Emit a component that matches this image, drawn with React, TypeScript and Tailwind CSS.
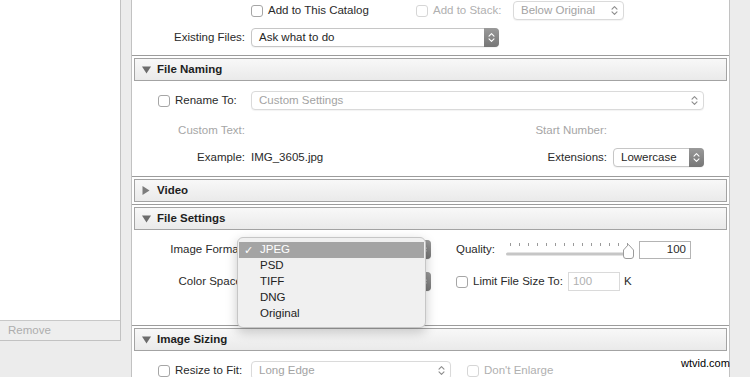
import React from "react";

const FONT = { fontFamily: '"Liberation Sans", Arial, Helvetica, sans-serif' };

function UpDown({ color }: { color: string }) {
  return (
    <svg width="7" height="11" viewBox="0 0 7 11">
      <path
        d="M1 4.2 L3.5 1.6 L6 4.2 M1 6.8 L3.5 9.4 L6 6.8"
        fill="none"
        stroke={color}
        strokeWidth="1.1"
        strokeLinecap="round"
        strokeLinejoin="round"
      />
    </svg>
  );
}

function Select({
  w,
  text,
  dark,
  disabled,
}: {
  w: string;
  text: string;
  dark?: boolean;
  disabled?: boolean;
}) {
  return (
    <div
      className={`${w} flex items-center h-[19px] rounded-[4px] border bg-white shadow-[0_1px_1px_rgba(0,0,0,0.05)] ${
        disabled ? "border-[#dadada] text-[#a3a3a3]" : "border-[#c6c6c6] text-[#262626]"
      }`}
    >
      <div className="flex-1 pl-[7px] leading-none whitespace-nowrap overflow-hidden">{text}</div>
      {dark ? (
        <div className="-my-px -mr-px h-[19px] w-[15px] rounded-r-[4px] bg-gradient-to-b from-[#9a9a9a] to-[#767676] flex items-center justify-center">
          <UpDown color="#ffffff" />
        </div>
      ) : (
        <div className="w-[15px] flex items-center justify-center pr-[2px]">
          <UpDown color="#8d8d8d" />
        </div>
      )}
    </div>
  );
}

function Check({ disabled }: { disabled?: boolean }) {
  return (
    <div
      className={`w-[12px] h-[12px] rounded-[3px] border bg-white shrink-0 ${
        disabled ? "border-[#d6d6d6]" : "border-[#a6a6a6]"
      }`}
    />
  );
}

function Header({ title, open }: { title: string; open: boolean }) {
  return (
    <div>
      <div className="h-px bg-[#9c9c9c]" />
      <div className="mx-[2px] mt-[2px] h-[23px] border border-[#a3a3a3] bg-gradient-to-b from-[#f8f8f8] to-[#eaeaea] flex items-center pl-[6px]">
        <div className="w-[10px] flex items-center justify-center">
          {open ? (
            <svg width="9" height="8" viewBox="0 0 9 8">
              <path d="M0 0.5 L9 0.5 L4.5 7.5 Z" fill="#6c6c6c" />
            </svg>
          ) : (
            <svg width="8" height="9" viewBox="0 0 8 9">
              <path d="M0.5 0 L7.5 4.5 L0.5 9 Z" fill="#7c7c7c" />
            </svg>
          )}
        </div>
        <div className="ml-[6px] font-bold text-[#1e1e1e]">{title}</div>
      </div>
    </div>
  );
}

function Slider() {
  const ticks = Array.from({ length: 14 }, (_, i) => 5 + i * 9);
  return (
    <svg width="130" height="19" viewBox="0 0 130 19">
      {ticks.map((x) => (
        <line key={x} x1={x + 0.5} y1="3" x2={x + 0.5} y2="6" stroke="#9a9a9a" strokeWidth="1" />
      ))}
      <rect x="1" y="12.5" width="124" height="3" rx="1.5" fill="#c6c6c6" />
      <path
        d="M123.5 4.5 L128.5 10 L128.5 16 Q128.5 18.5 126 18.5 L121 18.5 Q118.5 18.5 118.5 16 L118.5 10 Z"
        fill="#ffffff"
        stroke="#9b9b9b"
        strokeWidth="1"
      />
    </svg>
  );
}

export default function App() {
  const menu = ["JPEG", "PSD", "TIFF", "DNG", "Original"];
  return (
    <div
      className="relative w-[750px] h-[377px] overflow-hidden bg-[#ececec] text-[11.5px] text-[#2a2a2a] flex"
      style={FONT}
    >
      {/* Left panel */}
      <div className="w-[121px] h-[341px] bg-white border-r border-b border-[#c2c2c2] flex flex-col shrink-0">
        <div className="flex-1" />
        <div className="h-[20px] border-t border-[#c8c8c8] bg-[#eeeeee] flex items-center pl-[8px] text-[#adadad]">
          Remove
        </div>
      </div>

      {/* Main panel */}
      <div className="relative ml-[10px] w-[599px] h-[377px] bg-white border-l border-r border-[#c2c2c2] shrink-0">
        {/* Import section tail */}
        <div className="pt-px">
          <div className="flex items-center h-[19px]">
            <div className="w-[113px]" />
            <div className="ml-[6px] w-[165px] flex items-center">
              <Check />
              <span className="ml-[5px]">Add to This Catalog</span>
            </div>
            <div className="w-[97px] flex items-center text-[#b0b0b0]">
              <Check disabled />
              <span className="ml-[5px]">Add to Stack:</span>
            </div>
            <Select w="w-[111px]" text="Below Original" disabled />
          </div>
          <div className="mt-[8px] flex items-center h-[19px]">
            <div className="w-[113px] text-right">Existing Files:</div>
            <div className="ml-[6px]">
              <Select w="w-[248px]" text="Ask what to do" dark />
            </div>
          </div>
        </div>

        {/* File Naming */}
        <div className="mt-[8px]">
          <Header title="File Naming" open />
          <div className="pt-[10px] pb-[9px]">
            <div className="flex items-center h-[19px]">
              <div className="w-[113px] pl-[26px] flex items-center">
                <Check />
                <span className="ml-[5px]">Rename To:</span>
              </div>
              <div className="ml-[6px]">
                <Select w="w-[453px]" text="Custom Settings" disabled />
              </div>
            </div>
            <div className="mt-[11px] flex items-center h-[19px] text-[#a6a6a6]">
              <div className="w-[113px] text-right">Custom Text:</div>
              <div className="ml-[6px] w-[356px] text-right">Start Number:</div>
            </div>
            <div className="mt-[8px] flex items-center h-[19px]">
              <div className="w-[113px] text-right">Example:</div>
              <div className="ml-[6px] w-[356px] flex justify-between">
                <span>IMG_3605.jpg</span>
                <span>Extensions:</span>
              </div>
              <div className="ml-[6px]">
                <Select w="w-[91px]" text="Lowercase" dark />
              </div>
            </div>
          </div>
        </div>

        {/* Video */}
        <div>
          <Header title="Video" open={false} />
          <div className="h-[2px]" />
        </div>

        {/* File Settings */}
        <div>
          <Header title="File Settings" open />
          <div className="pt-[10px] pb-[34px]">
            <div className="flex items-center h-[19px]">
              <div className="w-[113px] text-right">Image Format:</div>
              <div className="ml-[6px]">
                <Select w="w-[180px]" text="" dark />
              </div>
              <div className="ml-[25px] w-[49px]">Quality:</div>
              <Slider />
              <div className="ml-[4px] w-[52px] h-[18px] border border-[#b4b4b4] bg-white flex items-center justify-end pr-[4px]">
                100
              </div>
            </div>
            <div className="mt-[13px] flex items-center h-[19px]">
              <div className="w-[113px] text-right">Color Space:</div>
              <div className="ml-[6px]">
                <Select w="w-[180px]" text="" dark />
              </div>
              <div className="ml-[25px] flex items-center">
                <Check />
                <span className="ml-[5px]">Limit File Size To:</span>
              </div>
              <div className="ml-[5px] w-[52px] h-[19px] border border-[#dadada] bg-white flex items-center pl-[4px] text-[#b0b0b0]">
                100
              </div>
              <div className="ml-[4px]">K</div>
            </div>
          </div>
        </div>

        {/* Image Sizing */}
        <div>
          <Header title="Image Sizing" open />
          <div className="pt-[10px]">
            <div className="flex items-center h-[19px]">
              <div className="w-[113px] pl-[26px] flex items-center">
                <Check />
                <span className="ml-[5px]">Resize to Fit:</span>
              </div>
              <div className="ml-[6px]">
                <Select w="w-[200px]" text="Long Edge" disabled />
              </div>
              <div className="ml-[16px] flex items-center text-[#b0b0b0]">
                <Check disabled />
                <span className="ml-[5px]">Don't Enlarge</span>
              </div>
            </div>
          </div>
        </div>

        {/* Popup menu */}
        <div className="absolute left-[105px] top-[237px] w-[189px] h-[91px] rounded-[6px] border border-[#c6c6c6] bg-[#f0f0f0] shadow-[0_4px_12px_rgba(0,0,0,0.22)] pt-[4px] px-px">
          {menu.map((m, i) => (
            <div
              key={m}
              className={`h-[16px] flex items-center ${
                i === 0 ? "bg-[#a4a4a4] text-white" : "text-[#222222]"
              }`}
            >
              <span className="w-[21px] pl-[5px] text-[11px]">{i === 0 ? "✓" : ""}</span>
              <span>{m}</span>
            </div>
          ))}
        </div>
      </div>

      {/* Watermark */}
      <div className="absolute left-[681px] top-[358px] text-[11px] text-black leading-none">wtvid.com</div>
    </div>
  );
}
